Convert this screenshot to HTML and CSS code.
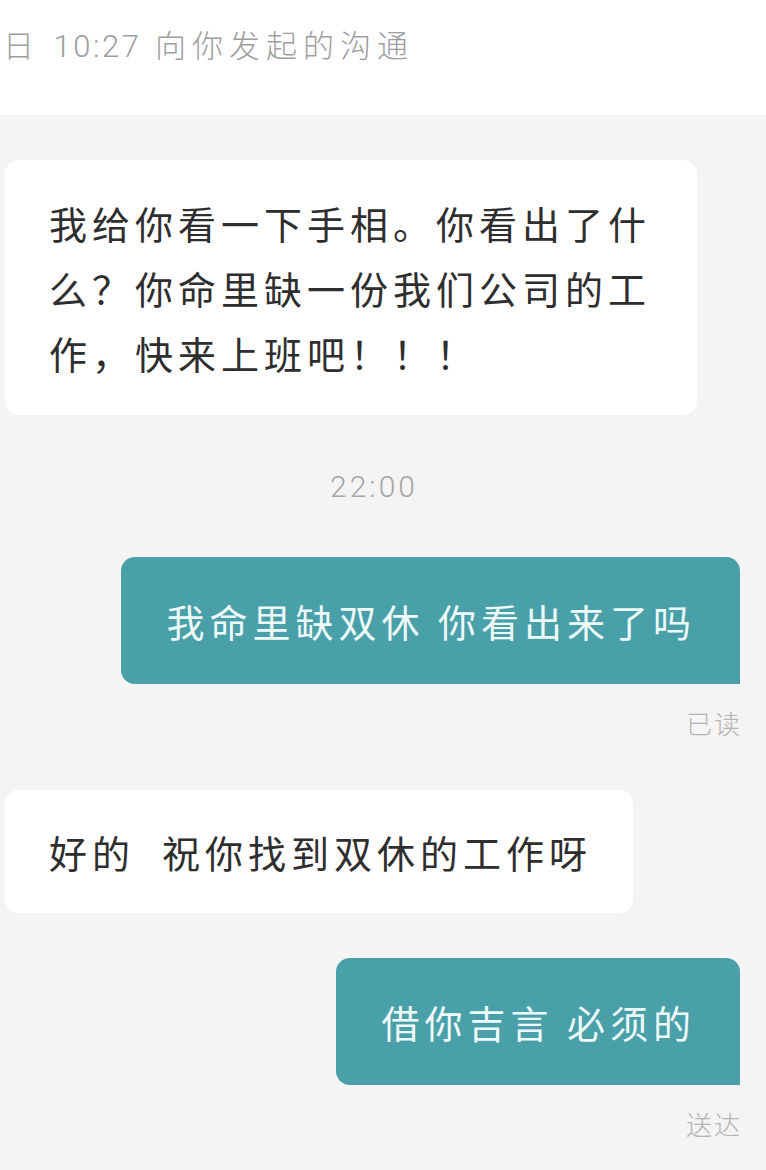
FILE: index.html
```html
<!DOCTYPE html>
<html lang="zh-CN">
<head>
<meta charset="utf-8">
<title>沟通</title>
<link rel="stylesheet" href="styles.css">
</head>
<body>
<header class="top">
  <div class="top-text">日 <span class="num">10:27</span> 向你发起的沟通</div>
</header>
<main class="chat">
  <div class="bubble in first">我给你看一下手相。你看出了什么？你命里缺一份我们公司的工作，快来上班吧！！！</div>
  <div class="time">22:00</div>
  <div class="bubble out b2">我命里缺双休 你看出来了吗</div>
  <div class="status">已读</div>
  <div class="bubble in b3">好的&nbsp; 祝你找到双休的工作呀</div>
  <div class="bubble out b4">借你吉言 必须的</div>
  <div class="status">送达</div>
</main>
</body>
</html>
```
FILE: styles.css
```css
html, body {
  margin: 0;
  padding: 0;
}
body {
  width: 766px;
  min-height: 1170px;
  background: #f4f4f4;
  font-family: "Noto Sans CJK SC", "Noto Sans", sans-serif;
  overflow: hidden;
}
.top {
  height: 115px;
  background: #ffffff;
  box-sizing: border-box;
  padding: 27px 0 0 3px;
}
.top-text {
  font-family: Roboto, "Noto Sans CJK SC", sans-serif;
  font-weight: 300;
  font-size: 31px;
  letter-spacing: 6px;
  line-height: 40px;
  color: #9e9e9e;
  white-space: nowrap;
}
.num {
  letter-spacing: 2.5px;
}
.chat {
  display: flex;
  flex-direction: column;
  align-items: flex-start;
}
.bubble {
  font-size: 38px;
  letter-spacing: 5px;
  line-height: 65px;
  border-radius: 14px;
  box-sizing: border-box;
}
.bubble.in {
  background: #ffffff;
  color: #2e2e2e;
  margin-left: 5px;
}
.bubble.out {
  background: #4aa0a8;
  color: #eefafa;
  align-self: flex-end;
  margin-right: 26px;
  border-bottom-right-radius: 0;
  padding: 31px 44px 31px 45px;
  white-space: nowrap;
}
.first {
  margin-top: 45px;
  width: 692px;
  padding: 30px 44px 30px 44px;
}
.time {
  align-self: stretch;
  text-align: center;
  padding-right: 18px;
  margin-top: 52px;
  font-family: Roboto, "Noto Sans CJK SC", sans-serif;
  font-weight: 300;
  font-size: 30px;
  letter-spacing: 3px;
  line-height: 40px;
  color: #a6a6a6;
}
.b2 {
  margin-top: 50px;
}
.status {
  align-self: flex-end;
  margin-right: 24px;
  margin-top: 21px;
  font-size: 26px;
  letter-spacing: 2px;
  line-height: 36px;
  color: #b3b3b3;
  font-weight: 300;
}
.b3 {
  margin-top: 49px;
  padding: 29px 41px 29px 44px;
  white-space: nowrap;
}
.b4 {
  margin-top: 45px;
}
```
